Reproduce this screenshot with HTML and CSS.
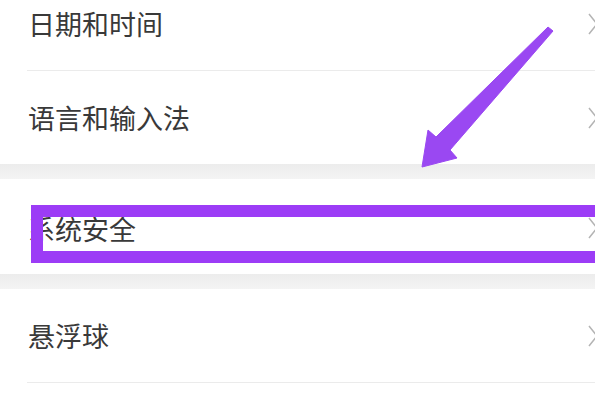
FILE: index.html
```html
<!DOCTYPE html>
<html lang="zh-CN">
<head>
  <meta charset="UTF-8">
  <meta name="viewport" content="width=device-width, initial-scale=1.0">
  <title>设置</title>
  <link rel="stylesheet" href="styles.css">
</head>
<body>
  <div class="screen">
    <div class="list">
      <div class="group">
        <div class="row first">
          <span class="label">日期和时间</span>
          <svg class="chev" viewBox="0 0 10 22"><polyline points="1,1 9,11 1,21"/></svg>
        </div>
        <div class="row">
          <span class="label">语言和输入法</span>
          <svg class="chev" viewBox="0 0 10 22"><polyline points="1,1 9,11 1,21"/></svg>
        </div>
      </div>
      <div class="band"></div>
      <div class="group">
        <div class="row single">
          <span class="label">系统安全</span>
          <svg class="chev" viewBox="0 0 10 22"><polyline points="1,1 9,11 1,21"/></svg>
        </div>
      </div>
      <div class="band"></div>
      <div class="group">
        <div class="row">
          <span class="label">悬浮球</span>
          <svg class="chev" viewBox="0 0 10 22"><polyline points="1,1 9,11 1,21"/></svg>
        </div>
      </div>
    </div>

    <!-- annotation marks drawn over the screenshot -->
    <div class="highlight"></div>
    <svg class="arrow" viewBox="0 0 600 400">
      <polygon points="553,31 548,27 436,137 428,130 422,167 457,158 450,150"/>
    </svg>
  </div>
</body>
</html>
```

FILE: styles.css
```css
body {
  margin: 0;
  background: #fff;
  font-family: "Noto Sans CJK SC", "Noto Sans", sans-serif;
  color: #393939;
}

.screen {
  position: relative;
  width: 600px;
  height: 400px;
  overflow: hidden;
}

.list {
  width: 595px;
  margin-top: -23px;
  overflow: hidden;
}

.row {
  display: flex;
  align-items: center;
  justify-content: space-between;
  height: 93px;
  margin-left: 27px;
  padding-left: 1px;
  border-bottom: 1px solid #ebebeb;
}

.row.single {
  height: 95px;
  border-bottom: none;
  padding-top: 3px;
  box-sizing: border-box;
}

.group .row:last-child {
  border-bottom: none;
}

.group:last-child .row {
  border-bottom: 1px solid #ebebeb;
}

.label {
  font-size: 27px;
  line-height: 1;
}

.chev {
  width: 10px;
  height: 22px;
  margin-right: -3px;
  fill: none;
  stroke: #b4b4b4;
  stroke-width: 1.5;
}

.band {
  height: 15px;
  background: linear-gradient(#ececec, #f4f4f4);
}

/* purple markup */
.highlight {
  position: absolute;
  left: 31px;
  top: 205px;
  width: 564px;
  height: 58px;
  border: 12px solid #9c3cf6;
  border-right: none;
  box-sizing: border-box;
}

.arrow {
  position: absolute;
  left: 0;
  top: 0;
  width: 600px;
  height: 400px;
  fill: #9a48f2;
  stroke: #9a48f2;
  stroke-width: 1;
  stroke-linejoin: round;
}
```
